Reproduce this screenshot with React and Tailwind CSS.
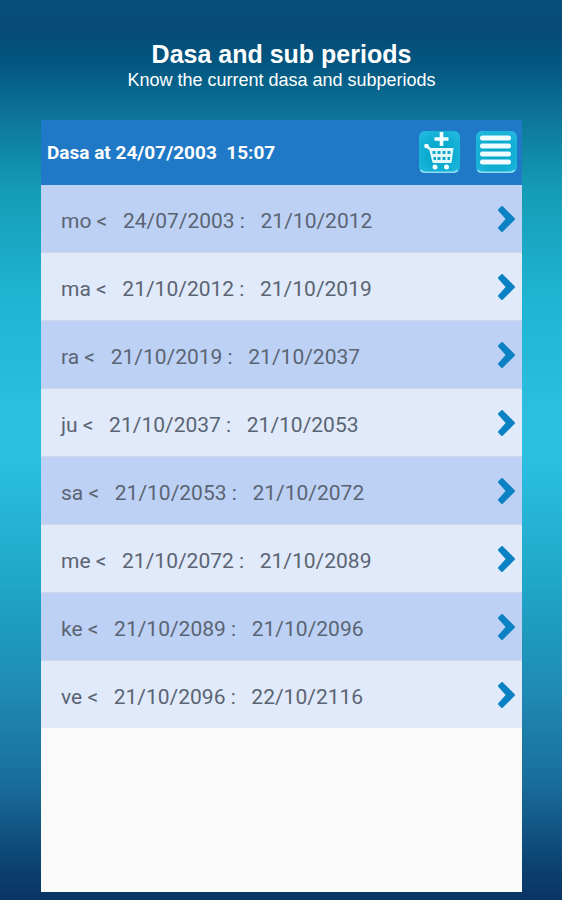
const periods = [
  { planet: 'mo', from: '24/07/2003', to: '21/10/2012' },
  { planet: 'ma', from: '21/10/2012', to: '21/10/2019' },
  { planet: 'ra', from: '21/10/2019', to: '21/10/2037' },
  { planet: 'ju', from: '21/10/2037', to: '21/10/2053' },
  { planet: 'sa', from: '21/10/2053', to: '21/10/2072' },
  { planet: 'me', from: '21/10/2072', to: '21/10/2089' },
  { planet: 'ke', from: '21/10/2089', to: '21/10/2096' },
  { planet: 've', from: '21/10/2096', to: '22/10/2116' },
];

function TileBase({ id }) {
  return (
    <>
      <defs>
        <radialGradient id={id} cx="0.5" cy="0.55" r="0.7">
          <stop offset="0" stopColor="#04a3c6" />
          <stop offset="0.5" stopColor="#0cadd0" />
          <stop offset="1" stopColor="#25b9e2" />
        </radialGradient>
      </defs>
      <rect x="0" y="0" width="41" height="42" rx="6" fill={`url(#${id})`} />
      <path d="M1.500 39c1 1.600 2.500 2.200 4.500 2.200h28c2 0 3.500-.6 4.500-2.200" stroke="#8fdcf2" strokeWidth="1.600" fill="none" />
    </>
  );
}

function CartIcon() {
  return (
    <svg viewBox="0 0 42 44" className="h-11 w-[42px]" aria-hidden="true">
      <TileBase id="cartTile" />
      <path d="M22.500 1v14M15.500 8h14" stroke="#f2fdff" strokeWidth="3.600" fill="none" />
      <path d="M8 15.500l3.500 3 3 12" stroke="#e9fbff" strokeWidth="2.500" strokeLinecap="round" strokeLinejoin="round" fill="none" />
      <circle cx="7.500" cy="15" r="2.300" fill="#fff" />
      <path d="M10.500 17h24l-2 15h-18z" fill="#e2f8fd" />
      <g fill="#12a6c8">
        <path d="M13.500 20h3v3h-3zM18.500 20h3v3h-3zM23.500 20h3v3h-3zM28.500 20h3v3h-3z" />
        <path d="M14.500 26h2.500v3h-2.500zM18.500 26h3v3h-3zM23.500 26h3v3h-3zM28.500 26h2.500v3h-2.500z" />
      </g>
      <circle cx="16" cy="36" r="2.500" fill="#f2fdff" />
      <circle cx="27.500" cy="36" r="2.500" fill="#f2fdff" />
    </svg>
  );
}

function MenuIcon() {
  return (
    <svg viewBox="0 0 42 44" className="h-11 w-[42px]" aria-hidden="true">
      <TileBase id="menuTile" />
      <g fill="#eefbff">
        <rect x="4" y="4.500" width="31" height="5" rx="2.500" />
        <rect x="4" y="12.500" width="31" height="5" rx="2.500" />
        <rect x="4" y="20.500" width="31" height="5" rx="2.500" />
        <rect x="4" y="28.500" width="31" height="5" rx="2.500" />
      </g>
    </svg>
  );
}

function Chevron() {
  return (
    <svg viewBox="0 0 18 28" className="h-7 w-[18px]" aria-hidden="true">
      <path
        d="M2 5L5 2 17 14 5 26 2 23 10 14z"
        fill="#0b82c3"
        stroke="#0b82c3"
        strokeWidth="2"
        strokeLinejoin="round"
      />
    </svg>
  );
}

function PeriodRow({ planet, from, to }) {
  return (
    <li className="border-b border-[#cdd6ea] odd:bg-[#bdd1f5] even:bg-[#e0eafa] last:border-b-0">
      <button type="button" className="flex h-[67px] w-full items-center justify-between pr-[7px] pl-5 text-left">
        <span className="pt-1 text-[21px] leading-7 whitespace-pre text-[#5b6473]">
          {`${planet} <   ${from} :   ${to}`}
        </span>
        <Chevron />
      </button>
    </li>
  );
}

export default function App() {
  return (
    <div className="flex min-h-screen flex-col bg-[linear-gradient(to_bottom,#07507a_0%,#064a76_3%,#035680_7%,#0c7396_12.500%,#149cb5_21%,#1fb4d3_33%,#2bbedf_45%,#2abfe1_51%,#1fa6c8_65%,#1f8ab3_77%,#196d9c_87%,#0b3e6c_97%,#0a3465_100%)] pr-10 pb-2 pl-[41px] font-['Roboto',sans-serif]">
      <div className="flex h-30 flex-col items-center pt-[38px] text-center font-['Liberation_Sans',Arial,sans-serif] text-white">
        <h1 className="text-[25px] leading-8 font-bold">Dasa and sub periods</h1>
        <p className="font-['Liberation_Sans_Narrow','Arial_Narrow','Liberation_Sans',sans-serif] text-[18px] leading-5">
          Know the current dasa and subperiods
        </p>
      </div>

      <main className="flex flex-1 flex-col bg-[#fafafa]">
        {/* App bar */}
        <header className="flex h-[65px] items-center justify-between bg-[#2079c7] pr-1 pl-1.5">
          <h2 className="text-[19px] leading-6 font-bold whitespace-pre text-white">{'Dasa at 24/07/2003  15:07'}</h2>
          <div className="flex gap-[15px]">
            <button type="button" aria-label="Buy">
              <CartIcon />
            </button>
            <button type="button" aria-label="Menu">
              <MenuIcon />
            </button>
          </div>
        </header>

        {/* Periods list */}
        <ul>
          {periods.map((period) => (
            <PeriodRow key={period.planet} {...period} />
          ))}
        </ul>
      </main>
    </div>
  );
}
